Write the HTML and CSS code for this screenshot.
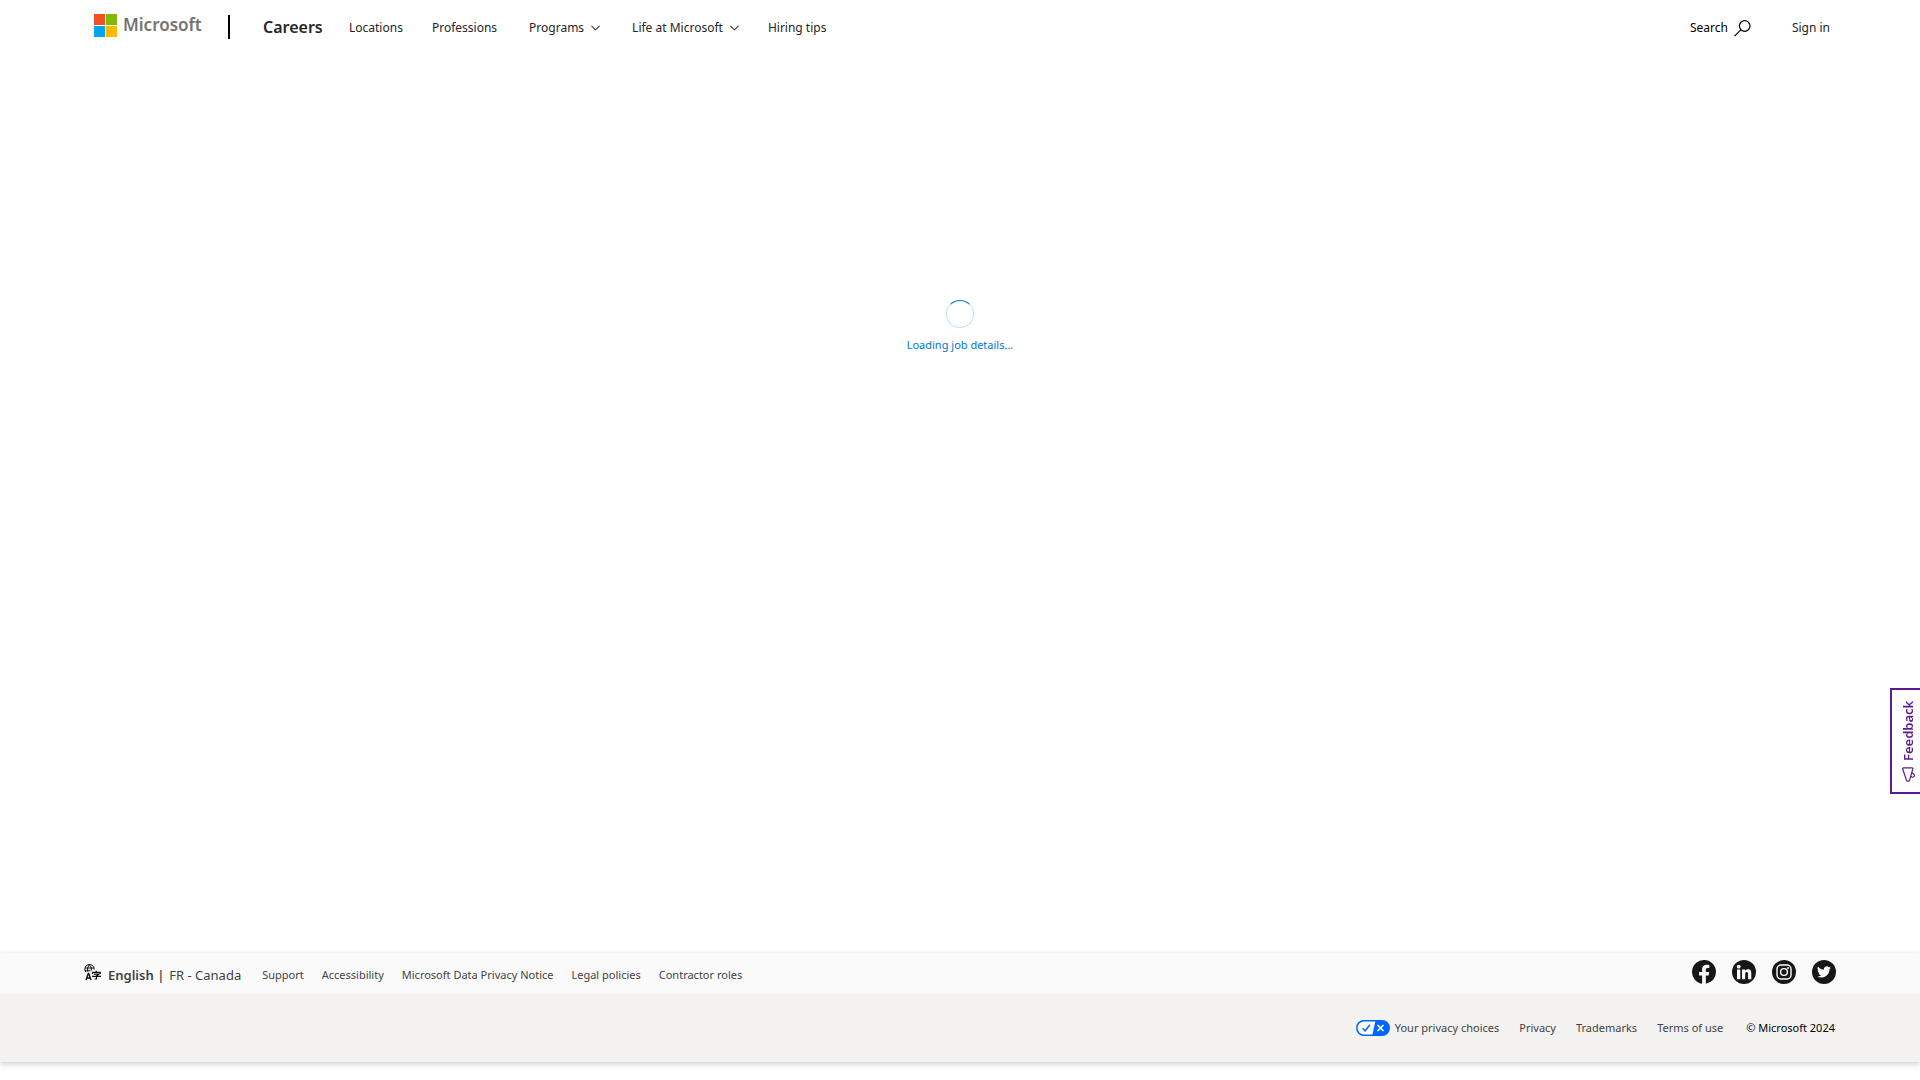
FILE: index.html
```html
<!DOCTYPE html>
<html lang="en">
<head>
<meta charset="utf-8">
<meta name="viewport" content="width=device-width, initial-scale=1">
<title>Microsoft Careers</title>
<link rel="stylesheet" href="styles.css">
</head>
<body>
<header class="header">
  <a class="logo" href="#">
    <svg width="23" height="23" viewBox="0 0 23 23" aria-hidden="true"><path fill="#f25022" d="M0 0h11v11H0z"/><path fill="#7fba00" d="M12 0h11v11H12z"/><path fill="#00a4ef" d="M0 12h11v11H0z"/><path fill="#ffb900" d="M12 12h11v11H12z"/></svg>
    <span>Microsoft</span>
  </a>
  <span class="divider"></span>
  <a class="brand" href="#">Careers</a>
  <nav class="nav" aria-label="Careers">
    <a class="nav-item" href="#">Locations</a>
    <a class="nav-item" href="#">Professions</a>
    <button class="nav-item menu" type="button">Programs<svg width="9" height="6" viewBox="0 0 9 6" aria-hidden="true"><path d="M.5.8l4 4 4-4" fill="none" stroke="#333" stroke-width="1.100"/></svg></button>
    <button class="nav-item menu" type="button">Life at Microsoft<svg width="9" height="6" viewBox="0 0 9 6" aria-hidden="true"><path d="M.5.8l4 4 4-4" fill="none" stroke="#333" stroke-width="1.100"/></svg></button>
    <a class="nav-item" href="#">Hiring tips</a>
  </nav>
  <button class="search" type="button">Search<svg width="17" height="17" viewBox="0 0 17 17" aria-hidden="true"><path d="M.5 16.2l6.3-6.3" stroke="#000" stroke-width="1.2"/><circle cx="10.7" cy="6" r="5.3" fill="none" stroke="#000" stroke-width="1.2"/></svg></button>
  <a class="signin" href="#">Sign in</a>
</header>

<main class="main">
  <div class="loading" role="status">
    <span class="spinner"></span>
    <span>Loading job details...</span>
  </div>
</main>

<footer class="footer">
  <div class="footer-top">
    <div class="language">
      <svg width="17" height="17" viewBox="0 0 17 17" fill="none" stroke="#111" aria-hidden="true"><path d="M1.800 8A4.700 4.700 0 1 1 10.200 5.500M1 4h9M1 6.800h5.500M3.600 7.500Q2.800 3.500 5.400.8Q8.200 3.500 7.300 6.500"/><path d="M2 16l2.300-6.500h.4L7 16M2.900 14h3.200" stroke-width="1.400"/><path d="M12.200 6.800v1.300M8.500 10V8.300h7.700V10M9.800 10.200h5l-2.300 1.700V15h-2M8 12.400h9" stroke-width="1.200"/></svg>
      <strong>English |</strong>
      <a href="#">FR - Canada</a>
    </div>
    <nav class="footer-links" aria-label="Footer">
      <a href="#">Support</a>
      <a href="#">Accessibility</a>
      <a href="#">Microsoft Data Privacy Notice</a>
      <a href="#">Legal policies</a>
      <a href="#">Contractor roles</a>
    </nav>
    <div class="social">
      <a href="#" aria-label="Facebook"><svg width="24" height="24" viewBox="0 0 24 24"><path fill="#171717" d="M24 12a12 12 0 1 0-13.900 11.850V15.470H7.080V12h3.020V9.360c0-3 1.790-4.670 4.530-4.670 1.320 0 2.690.24 2.690.24v2.950h-1.510c-1.500 0-1.960.93-1.960 1.880V12h3.330l-.53 3.470h-2.800v8.380A12 12 0 0 0 24 12z"/></svg></a>
      <a href="#" aria-label="LinkedIn"><svg width="24" height="24" viewBox="0 0 24 24"><circle cx="12" cy="12" r="12" fill="#171717"/><g fill="#fff"><circle cx="6.700" cy="6.700" r="1.900"/><path d="M5 9.600h3.300v9.600H5zM10 9.600h3.200v1.300c.6-1 1.600-1.600 2.900-1.600 2.500 0 3.200 1.600 3.200 4.100v5.800H16v-5.100c0-1.300-.2-2.100-1.300-2.100-1.200 0-1.500.9-1.500 2.200v5H10z"/></g></svg></a>
      <a href="#" aria-label="Instagram"><svg width="24" height="24" viewBox="0 0 24 24"><circle cx="12" cy="12" r="12" fill="#171717"/><g fill="none" stroke="#fff" stroke-width="1.400"><rect x="5" y="5" width="14" height="14" rx="4"/><circle cx="12" cy="12" r="3.400"/></g><circle cx="16" cy="8" r="1" fill="#fff"/></svg></a>
      <a href="#" aria-label="Twitter"><svg width="24" height="24" viewBox="0 0 24 24"><circle cx="12" cy="12" r="12" fill="#171717"/><path transform="translate(5 5) scale(.58)" fill="#fff" d="M24 4.560a9.800 9.800 0 0 1-2.830.78 4.930 4.930 0 0 0 2.170-2.730 9.900 9.900 0 0 1-3.130 1.200 4.920 4.920 0 0 0-8.380 4.480A13.980 13.980 0 0 1 1.670 3.150a4.930 4.930 0 0 0 1.520 6.570 4.900 4.900 0 0 1-2.230-.61c-.05 2.280 1.580 4.410 3.950 4.890a4.900 4.900 0 0 1-2.220.08 4.930 4.930 0 0 0 4.600 3.420A9.900 9.900 0 0 1 0 19.540a13.940 13.940 0 0 0 7.550 2.210c9.140 0 14.310-7.720 13.990-14.640A10 10 0 0 0 24 4.560z"/></svg></a>
    </div>
  </div>
  <div class="footer-bottom">
    <a class="privacy" href="#"><svg width="34" height="16" viewBox="0 0 34 16" aria-hidden="true"><rect x=".75" y=".75" width="32.500" height="14.500" rx="7.250" fill="#fff" stroke="#06f" stroke-width="1.500"/><path fill="#06f" d="M19.500.5H26a7.500 7.500 0 0 1 0 15H16.200z"/><path d="M6.500 8.200l2.700 2.600 4.700-6" fill="none" stroke="#06f" stroke-width="1.500"/><path d="M21.500 5l6 6M27.500 5l-6 6" stroke="#fff" stroke-width="1.600"/></svg>Your privacy choices</a>
    <a href="#">Privacy</a>
    <a href="#">Trademarks</a>
    <a href="#">Terms of use</a>
    <span class="copyright">© Microsoft 2024</span>
  </div>
</footer>

<button class="feedback" type="button"><svg width="13" height="15" viewBox="0 0 13 15" fill="none" stroke="#5c1990" stroke-width="1.200" aria-hidden="true"><path d="M12.400 13.200Q12.500 14.200 11.500 14.200H3Q1.900 14.200 2.200 13.200L5.500 1.600Q5.800.8 6.500.8H7.500Q8.200.8 8.500 1.600z"/><path d="M4.300 5.800C2.500 3.700 .3 5.200.7 7Q1.100 8.500 3 9.200"/></svg>Feedback</button>
</body>
</html>
```
FILE: styles.css
```css
* {
  box-sizing: border-box;
}

body {
  display: flex;
  flex-direction: column;
  min-height: 100vh;
  margin: 0;
  padding-bottom: 18px;
  background: #fff;
  color: #262626;
  font: 12px/20px "Noto Sans", "Open Sans", sans-serif;
}

a {
  color: inherit;
  text-decoration: none;
}

button {
  padding: 0;
  border: 0;
  background: none;
  color: inherit;
  font: inherit;
}

svg {
  display: block;
  flex: none;
}

.header {
  display: flex;
  align-items: center;
  height: 54px;
  padding: 0 90px 0 94px;
}

.logo {
  display: flex;
  align-items: center;
  gap: 6px;
  width: 134px;
  height: 50px;
  margin-bottom: 4px;
  color: #737373;
  font-size: 17px;
  font-weight: 600;
}

.divider {
  width: 2px;
  height: 24px;
  background: #000;
}

.brand {
  width: 86px;
  margin-left: 33px;
  font-size: 16px;
  font-weight: 600;
}

.nav {
  display: flex;
  gap: 29px;
}

.nav,
.search,
.signin {
  padding-top: 2px;
}

.menu,
.search {
  display: flex;
  align-items: center;
  gap: 7px;
}

.menu {
  padding-left: 3px;
}

.search {
  gap: 6px;
  margin-left: auto;
  color: #000;
}

.signin {
  margin-left: 41px;
}

.main {
  flex: 1;
  padding-top: 246px;
}

.loading {
  display: flex;
  flex-direction: column;
  align-items: center;
  gap: 7px;
  color: #0078d4;
  font-size: 11px;
}

.spinner {
  width: 28px;
  height: 28px;
  border: 1px solid #c7e0f4;
  border-top-color: #0078d4;
  border-radius: 50%;
}

.footer {
  background: #f3f2f1;
  box-shadow: 0 2px 6px rgba(0, 0, 0, 0.2);
  color: #424242;
  font-size: 11px;
}

.footer-top {
  display: flex;
  align-items: center;
  height: 41px;
  padding: 0 84px 3px;
  background: #fafafa;
}

.language {
  display: flex;
  align-items: center;
  gap: 5px;
  font-size: 13px;
}

.language svg {
  margin-right: 2px;
}

.language strong,
.language a,
.footer-links {
  padding-top: 5px;
}

.language strong {
  font-weight: 600;
}

.footer-links {
  display: flex;
  gap: 18px;
  margin-left: 21px;
}

.social {
  display: flex;
  gap: 16px;
  margin-left: auto;
}

.footer-bottom {
  display: flex;
  align-items: center;
  justify-content: flex-end;
  gap: 20px;
  height: 68px;
  padding: 0 85px 0 84px;
}

.privacy {
  display: flex;
  align-items: center;
  gap: 5px;
}

.copyright {
  padding-left: 3px;
  color: #000;
}

.feedback {
  position: fixed;
  top: 688px;
  right: 0;
  display: flex;
  align-items: center;
  gap: 6px;
  width: 30px;
  height: 106px;
  padding: 10px 5px 10px 0;
  border: 2px solid #5c1990;
  border-left: 0;
  background: #fff;
  color: #5c1990;
  font-size: 13px;
  font-weight: 600;
  writing-mode: vertical-rl;
  transform: rotate(180deg);
}
```
